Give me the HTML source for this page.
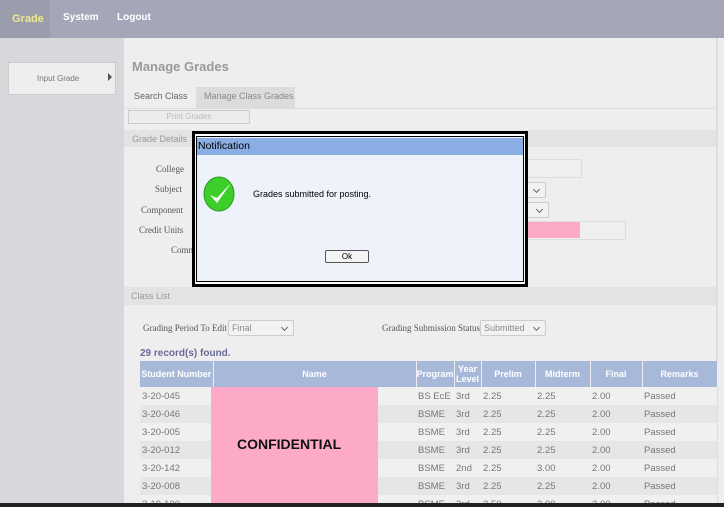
<!DOCTYPE html>
<html><head><style>
*{margin:0;padding:0;box-sizing:border-box}
html,body{width:724px;height:507px;overflow:hidden}
body{position:relative;background:#eeeeee;font-family:"Liberation Sans",sans-serif;font-size:9px;color:#777}
.a{position:absolute}
.lbl{font-family:"Liberation Serif",serif;color:#555;font-size:9px}
.sel{position:absolute;border:1px solid #ccc;border-radius:2px;background:#f2f2f2;font-size:9px;color:#888;padding:2px 3px}
.sel:after{content:"";position:absolute;right:6px;top:4px;width:4px;height:4px;border-right:1px solid #666;border-bottom:1px solid #666;transform:rotate(45deg)}
table{border-collapse:collapse;position:absolute;left:140px;top:361px;font-size:9.5px;color:#777;table-layout:fixed}
th{background:#a7b8d8;color:#fff;font-weight:bold;height:26px;border-right:1px solid #eee;font-size:9px;line-height:10px;overflow:hidden;white-space:nowrap}
td{height:18px;padding-left:2px;white-space:nowrap;overflow:hidden}
tr:nth-child(even) td{background:#f0f0f0}
tr:nth-child(odd) td{background:#e6e6e6}
</style></head><body>
<div class="a" style="left:0;top:0;width:724px;height:38px;background:#a3a7b8"></div>
<div class="a" style="left:0;top:0;width:50px;height:38px;background:#9a9eac"></div>
<div class="a" style="left:12px;top:13px;color:#eee98a;font-weight:bold;font-size:11px">Grade</div>
<div class="a" style="left:63px;top:12px;color:#fff;font-weight:bold;font-size:10px">System</div>
<div class="a" style="left:117px;top:12px;color:#fff;font-weight:bold;font-size:10px">Logout</div>
<div class="a" style="left:0;top:38px;width:124px;height:469px;background:#d6d8dc"></div>
<div class="a" style="left:8px;top:62px;width:108px;height:33px;background:#eeeeee;border:1px solid #ccc"></div>
<div class="a" style="left:37px;top:74px;font-size:8px;color:#777">Input Grade</div>
<div class="a" style="left:108px;top:73px;width:0;height:0;border-left:4px solid #555;border-top:4px solid transparent;border-bottom:4px solid transparent"></div>
<div class="a" style="left:716px;top:38px;width:2px;height:469px;background:#ddd"></div>
<div class="a" style="left:132px;top:59px;font-size:13px;font-weight:bold;color:#999">Manage Grades</div>
<div class="a" style="left:196px;top:87px;width:99px;height:22px;background:#dcdcdc"></div>
<div class="a" style="left:134px;top:91px;font-size:9px;color:#666">Search Class</div>
<div class="a" style="left:204px;top:91px;font-size:9px;color:#888">Manage Class Grades</div>
<div class="a" style="left:124px;top:108px;width:594px;height:1px;background:#ddd"></div>
<div class="a" style="left:128px;top:110px;width:122px;height:14px;border:1px solid #ccc;background:#ececec;text-align:center;color:#bbb;font-size:8px;line-height:12px">Print Grades</div>
<div class="a" style="left:124px;top:130px;width:592px;height:17px;background:#e3e3e3"></div>
<div class="a" style="left:132px;top:134px;font-size:9px;color:#999">Grade Details</div>
<div class="a lbl" style="left:156px;top:164px">College</div>
<div class="a lbl" style="left:155px;top:184px">Subject</div>
<div class="a lbl" style="left:141px;top:205px">Component</div>
<div class="a lbl" style="left:139px;top:225px">Credit Units</div>
<div class="a lbl" style="left:171px;top:245px">Comm</div>
<div class="a" style="left:520px;top:159px;width:62px;height:19px;border:1px solid #ddd;background:#efefef"></div>
<div class="sel" style="left:520px;top:182px;width:26px;height:16px"></div>
<div class="sel" style="left:520px;top:202px;width:29px;height:16px"></div>
<div class="a" style="left:520px;top:221px;width:106px;height:19px;border:1px solid #ddd;background:#efefef"></div>
<div class="a" style="left:524px;top:222px;width:56px;height:16px;background:#fdaac8"></div>
<div class="a" style="left:124px;top:287px;width:592px;height:18px;background:#e3e3e3"></div>
<div class="a" style="left:131px;top:291px;font-size:9px;color:#999">Class List</div>
<div class="a lbl" style="left:143px;top:323px">Grading Period To Edit</div>
<div class="sel" style="left:228px;top:320px;width:66px;height:16px">Final</div>
<div class="a lbl" style="left:382px;top:323px">Grading Submission Status</div>
<div class="sel" style="left:480px;top:320px;width:66px;height:16px">Submitted</div>
<div class="a" style="left:140px;top:348px;font-weight:bold;color:#6a6a9a;font-size:10px">29 record(s) found.</div>
<table>
<colgroup><col style="width:73px"><col style="width:203px"><col style="width:36px"><col style="width:27px"><col style="width:54px"><col style="width:55px"><col style="width:52px"><col style="width:75px"></colgroup>
<tr><th>Student Number</th><th>Name</th><th>Program</th><th>Year<br>Level</th><th>Prelim</th><th>Midterm</th><th>Final</th><th>Remarks</th></tr>
<tr><td>3-20-045</td><td></td><td>BS EcE</td><td>3rd</td><td>2.25</td><td>2.25</td><td>2.00</td><td>Passed</td></tr>
<tr><td>3-20-046</td><td></td><td>BSME</td><td>3rd</td><td>2.25</td><td>2.25</td><td>2.00</td><td>Passed</td></tr>
<tr><td>3-20-005</td><td></td><td>BSME</td><td>3rd</td><td>2.25</td><td>2.25</td><td>2.00</td><td>Passed</td></tr>
<tr><td>3-20-012</td><td></td><td>BSME</td><td>3rd</td><td>2.25</td><td>2.25</td><td>2.00</td><td>Passed</td></tr>
<tr><td>3-20-142</td><td></td><td>BSME</td><td>2nd</td><td>2.25</td><td>3.00</td><td>2.00</td><td>Passed</td></tr>
<tr><td>3-20-008</td><td></td><td>BSME</td><td>3rd</td><td>2.25</td><td>2.25</td><td>2.00</td><td>Passed</td></tr>
<tr><td>3-19-100</td><td></td><td>BSME</td><td>3rd</td><td>2.50</td><td>2.00</td><td>2.00</td><td>Passed</td></tr>
</table>
<div class="a" style="left:211px;top:387px;width:167px;height:120px;background:#fdaac8"></div>
<div class="a" style="left:237px;top:436px;font-weight:bold;color:#111;font-size:14px">CONFIDENTIAL</div>
<div class="a" style="left:0;top:503px;width:724px;height:4px;background:#222"></div>
<div class="a" style="left:192px;top:131px;width:336px;height:156px;border:3px solid #000;background:#fff"></div>
<div class="a" style="left:196px;top:136px;width:328px;height:146px;border:1px solid #000;background:#eef2fb"></div>
<div class="a" style="left:197px;top:138px;width:326px;height:17px;background:#8aaee3"></div>
<div class="a" style="left:198px;top:140px;font-size:10.5px;color:#000">Notification</div>
<svg class="a" style="left:203px;top:174px" width="34" height="38" viewBox="0 0 34 38"><ellipse cx="16" cy="20" rx="15" ry="17" fill="#3ccf2a" stroke="#2a9a1e"/><path d="M7 21 L14 29 L28 9 L14 24 Z" fill="#fff"/></svg>
<div class="a" style="left:253px;top:189px;font-size:9px;color:#000">Grades submitted for posting.</div>
<div class="a" style="left:325px;top:250px;width:44px;height:13px;border:1px solid #555;border-radius:2px;background:#f4f4f4;text-align:center;font-size:8px;color:#000;line-height:11px">Ok</div>
</body></html>
